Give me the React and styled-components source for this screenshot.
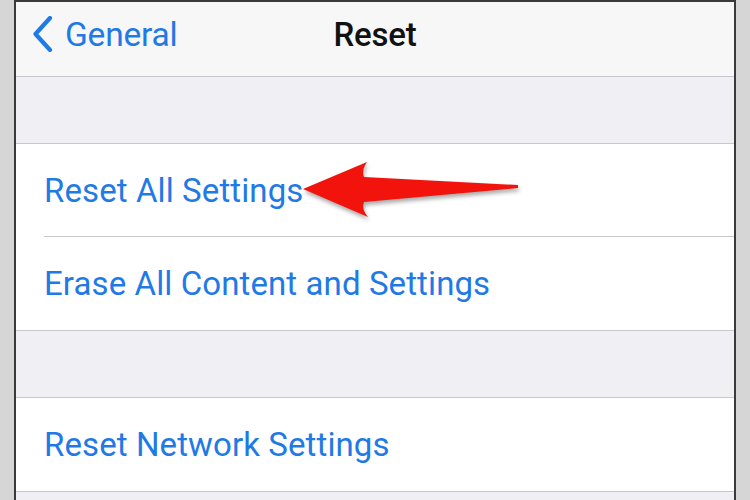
import React from "react";
import styled, { createGlobalStyle } from "styled-components";

const Global = createGlobalStyle`
  html, body { margin: 0; padding: 0; background: #d6d6d6; overflow: hidden; }
  body { font-family: Roboto, "Noto Sans", sans-serif; }
`;

const Frame = styled.div`
  margin-left: 14px;
  width: 722px;
  height: 500px;
  box-sizing: border-box;
  border: 2px solid #3a3a3a;
  border-bottom: none;
  background: #efeff4;
  overflow: hidden;
`;

const NavBar = styled.div`
  height: 75px;
  padding-bottom: 10px;
  background: #f7f7f8;
  border-bottom: 1px solid #c8c7cc;
  display: grid;
  grid-template-columns: 1fr auto 1fr;
  align-items: center;
  box-sizing: border-box;
`;

const Back = styled.div`
  display: flex;
  align-items: center;
  gap: 12px;
  padding-left: 16px;
  color: #1f7ae6;
  font-size: 33.5px;
  letter-spacing: -0.2px;
`;

const Title = styled.div`
  font-size: 33px;
  font-weight: 500;
  color: #111;
  letter-spacing: -0.2px;
`;

const Spacer = styled.div`
  height: ${(p) => p.$h}px;
  background: #efeff4;
  border-bottom: 1px solid #c8c7cc;
`;

const Group = styled.div`
  background: #fff;
  border-bottom: 1px solid #c8c7cc;
`;

const Row = styled.div`
  position: relative;
  height: ${(p) => p.$h}px;
  display: flex;
  align-items: center;
  padding-left: 28px;
  ${(p) => p.$sep && `
    &::after {
      content: "";
      position: absolute;
      left: 28px; right: 0; bottom: 0;
      height: 1px;
      background: #c8c7cc;
    }
  `}
`;

const Label = styled.span`
  color: #1f7ae6;
  font-size: 33px;
  letter-spacing: 0.1px;
  white-space: nowrap;
`;

const Arrow = styled.svg`
  position: absolute;
  left: 0;
  top: 0;
  overflow: visible;
  filter: drop-shadow(1px 3px 2px rgba(0,0,0,0.35));
`;

function Chevron() {
  return (
    <svg width="21" height="36" viewBox="0 0 21 36">
      <path d="M18 2 L3.5 18 L18 34" fill="none" stroke="#1f7ae6" strokeWidth="4.2" strokeLinecap="round" strokeLinejoin="round" />
    </svg>
  );
}

export default function App() {
  return (
    <>
      <Global />
      <Frame>
        <NavBar>
          <Back>
            <Chevron />
            <span>General</span>
          </Back>
          <Title>Reset</Title>
          <div />
        </NavBar>
        <Spacer $h={66} />
        <Group>
          <Row $h={93} $sep>
            <Label>Reset All Settings</Label>
            <Arrow width="1" height="1">
              <path
                d="M287 45 L351 18 Q345 27 348 33 L502 41 L502 44 L348 58 Q345 65 352 73 Z"
                fill="#f2130c"
              />
            </Arrow>
          </Row>
          <Row $h={93}>
            <Label>Erase All Content and Settings</Label>
          </Row>
        </Group>
        <Spacer $h={66} />
        <Group>
          <Row $h={93}>
            <Label>Reset Network Settings</Label>
          </Row>
        </Group>
      </Frame>
    </>
  );
}
